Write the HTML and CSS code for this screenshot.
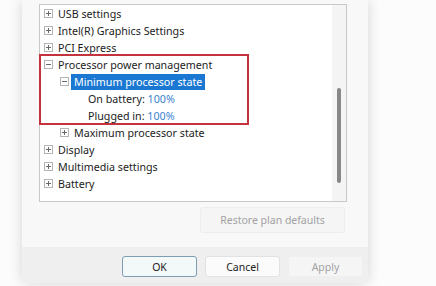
FILE: index.html
```html
<!DOCTYPE html>
<html>
<head>
<meta charset="utf-8">
<link rel="stylesheet" href="styles.css">
</head>
<body>
<div class="stage">
  <div class="dialog">
    <div class="body">
      <div class="tree">
        <div class="list">
          <div class="row l0"><svg class="exp" viewBox="0 0 9 9"><rect x="0.5" y="0.5" width="8" height="8" fill="#fff" stroke="#b4b4b4"/><path d="M2 4.5h5M4.5 2v5" stroke="#6a6a6a"/></svg><span class="label">USB settings</span></div>
          <div class="row l0"><svg class="exp" viewBox="0 0 9 9"><rect x="0.5" y="0.5" width="8" height="8" fill="#fff" stroke="#b4b4b4"/><path d="M2 4.5h5M4.5 2v5" stroke="#6a6a6a"/></svg><span class="label">Intel(R) Graphics Settings</span></div>
          <div class="row l0"><svg class="exp" viewBox="0 0 9 9"><rect x="0.5" y="0.5" width="8" height="8" fill="#fff" stroke="#b4b4b4"/><path d="M2 4.5h5M4.5 2v5" stroke="#6a6a6a"/></svg><span class="label">PCI Express</span></div>
          <div class="row l0"><svg class="exp" viewBox="0 0 9 9"><rect x="0.5" y="0.5" width="8" height="8" fill="#fff" stroke="#b4b4b4"/><path d="M2 4.5h5" stroke="#6a6a6a"/></svg><span class="label">Processor power management</span></div>
          <div class="row l1"><svg class="exp" viewBox="0 0 9 9"><rect x="0.5" y="0.5" width="8" height="8" fill="#fff" stroke="#b4b4b4"/><path d="M2 4.5h5" stroke="#6a6a6a"/></svg><span class="label sel">Minimum processor state</span></div>
          <div class="row l2"><span class="label">On battery: <span class="val">100%</span></span></div>
          <div class="row l2"><span class="label">Plugged in: <span class="val">100%</span></span></div>
          <div class="row l1"><svg class="exp" viewBox="0 0 9 9"><rect x="0.5" y="0.5" width="8" height="8" fill="#fff" stroke="#b4b4b4"/><path d="M2 4.5h5M4.5 2v5" stroke="#6a6a6a"/></svg><span class="label">Maximum processor state</span></div>
          <div class="row l0"><svg class="exp" viewBox="0 0 9 9"><rect x="0.5" y="0.5" width="8" height="8" fill="#fff" stroke="#b4b4b4"/><path d="M2 4.5h5M4.5 2v5" stroke="#6a6a6a"/></svg><span class="label">Display</span></div>
          <div class="row l0"><svg class="exp" viewBox="0 0 9 9"><rect x="0.5" y="0.5" width="8" height="8" fill="#fff" stroke="#b4b4b4"/><path d="M2 4.5h5M4.5 2v5" stroke="#6a6a6a"/></svg><span class="label">Multimedia settings</span></div>
          <div class="row l0"><svg class="exp" viewBox="0 0 9 9"><rect x="0.5" y="0.5" width="8" height="8" fill="#fff" stroke="#b4b4b4"/><path d="M2 4.5h5M4.5 2v5" stroke="#6a6a6a"/></svg><span class="label">Battery</span></div>
        </div>
        <div class="scrollbar"><div class="thumb"></div></div>
        <div class="highlight-box"></div>
      </div>
      <div class="actions">
        <div class="btn restore">Restore plan defaults</div>
      </div>
    </div>
    <div class="footer">
      <div class="btn ok">OK</div>
      <div class="btn">Cancel</div>
      <div class="btn disabled">Apply</div>
    </div>
  </div>
</div>
</body>
</html>
```
FILE: styles.css
```css
html, body {
  margin: 0;
  padding: 0;
  background: #fcfcfc;
  font-family: "Noto Sans", "Open Sans", sans-serif;
  font-size: 10.7px;
  color: #1c1c1c;
}
.stage {
  height: 286px;
  padding-left: 22px;
  overflow: hidden;
}
.dialog {
  width: 346px;
  height: 283px;
  background: #f8f8f8;
  box-shadow: 0 0 14px rgba(0, 0, 0, 0.16);
  border-radius: 0 0 7px 7px;
  display: flex;
  flex-direction: column;
  overflow: hidden;
}
.body {
  flex: 1;
  padding: 4px 21px 0 17px;
}
.tree {
  position: relative;
  height: 198px;
  box-sizing: border-box;
  border: 1px solid #c8c8c8;
  background: #fff;
  display: flex;
}
.list {
  flex: 1;
  padding-top: 0;
}
.row {
  height: 17px;
  display: flex;
  align-items: center;
  white-space: nowrap;
}
.row.l0 { padding-left: 4px; }
.row.l1 { padding-left: 20px; }
.row.l2 { padding-left: 45px; }
.exp {
  width: 9px;
  height: 9px;
  flex: none;
  margin-right: 2px;
}
.label {
  padding: 0 3px;
  line-height: 16px;
}
.label.sel {
  background: #1a78d2;
  color: #fff;
}
.val {
  color: #3b82d0;
}
.scrollbar {
  width: 14px;
  background: #f4f4f4;
  position: relative;
  display: flex;
  justify-content: center;
  padding-top: 83px;
  box-sizing: border-box;
}
.thumb {
  width: 4px;
  height: 95px;
  border-radius: 2px;
  background: #878787;
}
.highlight-box {
  position: absolute;
  left: -1px;
  top: 49px;
  width: 210px;
  height: 71px;
  box-sizing: border-box;
  border: 2px solid #c3323d;
}
.actions {
  display: flex;
  justify-content: flex-end;
  margin-top: 5px;
  padding-right: 2px;
}
.btn {
  width: 75px;
  height: 21px;
  box-sizing: border-box;
  border: 1px solid #e2e2e2;
  border-radius: 3px;
  background: #fbfbfb;
  display: flex;
  align-items: center;
  justify-content: center;
  font-size: 10.5px;
  color: #222;
}
.btn.restore {
  width: 145px;
  height: 26px;
  background: #f5f5f5;
  border-color: #ededed;
  color: #a2a2a2;
}
.footer {
  height: 36px;
  box-sizing: border-box;
  background: #efefef;
  padding: 9px 0 0 100px;
  display: flex;
  gap: 8px;
}
.btn.ok {
  border-color: #7d9db3;
  background: #f3f8f9;
}
.btn.disabled {
  background: #f5f5f5;
  border-color: #efefef;
  color: #a3a3a3;
}
```
